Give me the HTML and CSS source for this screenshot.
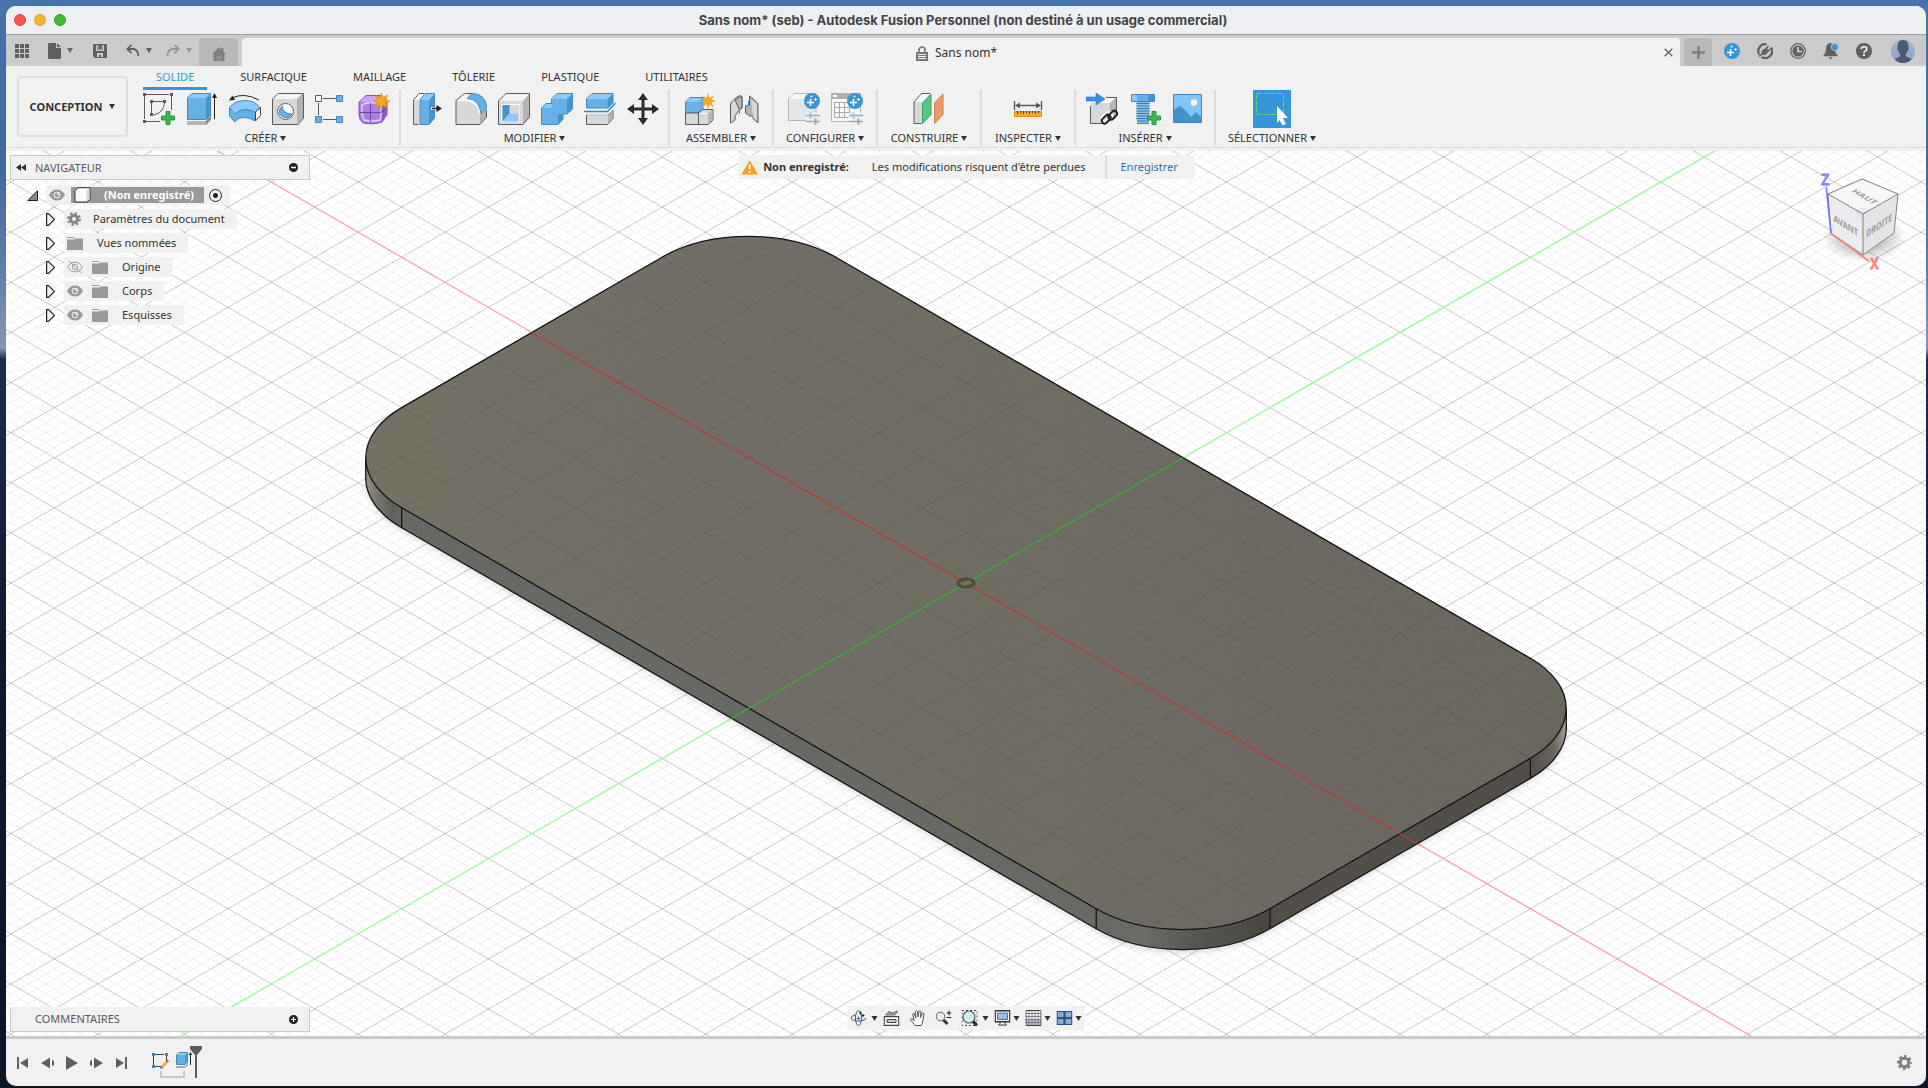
FILE: index.html
```html
<!DOCTYPE html>
<html lang="fr">
<head>
<meta charset="utf-8">
<title>Sans nom* (seb) - Autodesk Fusion Personnel</title>
<link rel="stylesheet" href="styles.css">
</head>
<body>
<div class="window">
  <header class="titlebar">
    <div class="lights"><button class="light red" aria-label="Fermer"></button><button class="light amber" aria-label="Réduire"></button><button class="light green" aria-label="Agrandir"></button></div>
    <h1>Sans nom* (seb) - Autodesk Fusion Personnel (non destiné à un usage commercial)</h1>
  </header>

  <div class="tabbar">
    <div class="quick">
      <button class="q-grid" aria-label="Groupe de données"><svg width="14" height="14" viewBox="0 0 14 14" fill="#606060"><path d="M0 0h4v4H0zM5 0h4v4H5zM10 0h4v4h-4zM0 5h4v4H0zM5 5h4v4H5zM10 5h4v4h-4zM0 10h4v4H0zM5 10h4v4H5zM10 10h4v4h-4z"/></svg></button>
      <button class="q-file" aria-label="Fichier"><svg width="13" height="16" viewBox="0 0 13 16" fill="#606060"><path d="M1 0h7v5h5v10l-1 1H1l-1-1V1zM9 0l4 4H9z"/></svg><i class="caret"></i></button>
      <button class="q-save" aria-label="Enregistrer"><svg width="14" height="14" viewBox="0 0 14 14"><path fill="#606060" d="M1 0h12l1 1v13H2l-2-2V1z"/><path fill="#cbcbcb" d="M3 1h8v6H3zM4 9h6v4H8v-2H6v2H4z"/><path fill="#606060" d="M4 1h6v4.500H4z"/><path fill="#cbcbcb" d="M4 1h2v4H4zM8.500 1H10v4H8.500z" opacity=".5"/></svg></button>
      <button class="q-undo" aria-label="Annuler"><svg width="14" height="13" viewBox="0 0 14 13" fill="none" stroke="#606060" stroke-width="1.800"><path d="M1 5h6q5 0 5.500 7M5.500 .8L1.300 5l4.200 4.200"/></svg><i class="caret"></i></button>
      <button class="q-redo" aria-label="Rétablir"><svg width="14" height="13" viewBox="0 0 14 13" fill="none" stroke="#979797" stroke-width="1.800"><path d="M13 5H7q-5 0-5.500 7M8.500 .8L12.700 5 8.500 9.200"/></svg><i class="caret pale"></i></button>
    </div>
    <button class="home" aria-label="Accueil"><svg width="14" height="14" viewBox="0 0 14 14" fill="#808080"><path d="M7 0l2.500 2.500V1h2v3.500L14 7.300h-1.500V14H8.500V9.500h-3V14h-4V7.300H0z"/><path d="M6 10.500h2V14H6z"/></svg></button>
    <div class="doctab">
      <span class="docname"><svg width="12" height="15" viewBox="0 0 12 15"><path d="M3 6V4a3 3 0 0 1 6 0v2" fill="none" stroke="#777" stroke-width="1.700"/><path fill="#777" d="M0 6h12v9H0z"/><path stroke="#f1f1f1" d="M2 8.500h8M2 10.500h8M2 12.500h8"/></svg>Sans nom*</span>
      <button class="close" aria-label="Fermer l'onglet"><svg width="9" height="9" viewBox="0 0 9 9" stroke="#606060" stroke-width="1.300"><path d="M.7 .7l7.600 7.600M8.300 .7L.7 8.300"/></svg></button>
    </div>
    <button class="newtab" aria-label="Nouvel onglet"><svg width="13" height="13" viewBox="0 0 13 13" stroke="#808080" stroke-width="2.600"><path d="M6.500 0v13M0 6.500h13"/></svg></button>
    <div class="status">
      <button aria-label="Extensions"><svg width="16" height="16" viewBox="0 0 16 16"><circle cx="8" cy="8" r="8" fill="#3697d8"/><path stroke="#fff" stroke-width="1.600" d="M6.500 6v7M3 9.500h7"/><path stroke="#fff" stroke-width="1" d="M11.500 5v3M10 6.500h3M7.500 2.500v2M6.500 3.500h2"/></svg></button>
      <button aria-label="Connexion"><svg width="16" height="16" viewBox="0 0 16 16"><path fill="none" stroke="#606060" stroke-width="2.200" d="M2.200 11.500A6.900 6.900 0 0 1 9.500 1.300M14 4.500A6.900 6.900 0 0 1 4.500 14"/><path fill="#606060" d="M4.500 8L9 4.500l3 3.500-3 3.500q-2.500 1.500-4.500-.5z"/><path stroke="#606060" stroke-width="1.600" d="M8.500 6.500l3-3.500M10.500 8.500l3.500-3M6 10l-4 3.500"/></svg></button>
      <button aria-label="Historique"><svg width="16" height="16" viewBox="0 0 16 16"><circle cx="8" cy="8" r="7.300" fill="none" stroke="#606060" stroke-width="1.300"/><circle cx="8" cy="8" r="5.600" fill="#606060"/><path d="M8 4v4.500h4" fill="none" stroke="#e0e0e0" stroke-width="1.500"/></svg></button>
      <button aria-label="Notifications"><svg width="16" height="16" viewBox="0 0 16 16"><path fill="#606060" d="M7 0q5 1 5 6 0 4 2.500 6v1.200H.5V12Q3 10 3 6q0-5 4-6zM5.500 14.200h4q-.5 1.800-2 1.800t-2-1.800z"/><circle cx="11.800" cy="4" r="3.600" fill="#3697d8" stroke="#cbcbcb" stroke-width=".8"/></svg></button>
      <button aria-label="Aide"><svg width="16" height="16" viewBox="0 0 16 16"><circle cx="8" cy="8" r="8" fill="#606060"/><path d="M5.300 6.300q0-2.700 2.700-2.700 2.800 0 2.800 2.300 0 1.200-1.500 2.100Q8 8.700 8 10" fill="none" stroke="#e4e4e4" stroke-width="1.900"/><path fill="#e4e4e4" d="M7 11h2v2H7z"/></svg></button>
    </div>
    <button class="avatar" aria-label="Profil"><svg width="24" height="24" viewBox="0 0 24 24"><defs><linearGradient id="av" x2="0" y2="1"><stop stop-color="#a9bcd9"/><stop offset="1" stop-color="#8c9dbd"/></linearGradient></defs><circle cx="12" cy="12" r="12" fill="url(#av)"/><path fill="#4c5b6e" d="M12 1q5.500 0 5.500 6 0 1 .3 2.500-.3 2-1.300 2.500-.5 2-1.800 3.300 0 2 1.300 2.700 3.500 1 4.500 2.500a12 12 0 0 1-17 0q1-1.500 4.500-2.500 1.300-.7 1.300-2.700Q8 14 7.500 12q-1-.5-1.300-2.500.3-1.500.3-2.500 0-6 5.500-6z"/></svg></button>
  </div>

  <section class="ribbon">
    <button class="workspace">CONCEPTION<i class="caret"></i></button>
    <div class="tools">
      <nav class="rtabs">
        <button class="active">SOLIDE</button><button>SURFACIQUE</button><button>MAILLAGE</button><button>TÔLERIE</button><button>PLASTIQUE</button><button>UTILITAIRES</button>
      </nav>
      <div class="groups">
        <div class="group w-create">
          <div class="icons">
            <button aria-label="Créer une esquisse"><svg viewBox="0 0 32 32"><path fill="none" stroke="#5c5c5c" d="M3 1.500h23M1.500 3v23M28.500 3v14M3 28.500h14"/><path fill="none" stroke="#5c5c5c" d="M10 8.500h10M8.500 10v10M21.500 10q-1 10-11 12"/><path fill="#5c5c5c" d="M0 0h3v3H0zM27 0h3v3h-3zM0 27h3v3H0zM7 7h3v3H7zM20 7h3v3h-3zM7 20h3v3H7z"/><path fill="#3fb354" stroke="#2a953f" d="M23 18.500h4V23h4.500v4H27v4.500h-4V27h-4.500v-4H23z"/></svg></button>
            <button aria-label="Extrusion"><svg viewBox="0 0 32 32"><path fill="#b5b5b5" d="M1 28h19v4H1zM20 28l5-5v4l-5 5z"/><path fill="#8a8a8a" d="M20 28l5-6v4l-5 6z"/><path fill="#67b0e6" d="M1 5h19v22H1z"/><path fill="#8bcaf9" d="M1 5l5-5h19l-5 5z"/><path fill="#4793cb" d="M20 5l5-5v22l-5 5z"/><path fill="none" stroke="#3f8ac4" d="M1.500 5L6 .5h18.500V22L20 26.500H1.500z"/><path stroke="#222" d="M28.500 3v23"/><path fill="#222" d="M28.500 0l2.500 5h-5z"/></svg></button>
            <button aria-label="Révolution"><svg viewBox="0 0 32 32"><path fill="#67b0e6" stroke="#3f8ac4" d="M.5 14.500V23l5.500 6q0-2 5-4 5-1 8 0 5 1 6 3l2-10z"/><path fill="#8bcaf9" stroke="#3f8ac4" d="M.5 14.500Q6 7.500 16 7.500T31 14.500L26 19.500q-4-3-10-3-6 0-10 4.500z"/><path fill="#fff" stroke="#444" d="M26.500 19l5-4.500v8L26.500 28z"/><path fill="none" stroke="#222" d="M3 5Q15-1 30 7"/><path fill="#222" d="M0 7.500l3.500-5L6 7z"/></svg></button>
            <button aria-label="Perçage"><svg viewBox="0 0 32 32"><path fill="#f4f4f4" d="M1 6l6-6h24l-6 6z"/><path fill="#b4b4b4" d="M25 6l6-6v25l-6 6z"/><path fill="#d8d8d8" d="M1 6h24v25H1z"/><path fill="none" stroke="#5a5a5a" d="M.5 6L6 .5h25.500V25L26 31.500H.500z"/><circle cx="13.500" cy="18.500" r="8" fill="#fff" stroke="#5a5a5a"/><path fill="#67b0e6" stroke="#3f8ac4" d="M10 13q1 8 10 8-3 5-8 3.500Q6 22 7.500 17z"/></svg></button>
            <button aria-label="Réseau rectangulaire"><svg viewBox="0 0 32 32"><path stroke="#5a5a5a" d="M8 5.500h13M3.500 10v12M8 26.500h13"/><path fill="#fff" stroke="#5a5a5a" d="M.5 2.500h6v6h-6z"/><path fill="#67b0e6" stroke="#3f8ac4" d="M21.500 2.500h6v6h-6zM.5 23.500h6v6h-6zM21.500 23.500h6v6h-6z"/></svg></button>
            <button aria-label="Créer une forme"><svg viewBox="0 0 32 32"><path fill="#a97fe0" stroke="#7a50b8" d="M8 2.500h14l7 5v14L24 29q-8 3-19 1-4-3-4-9V9z"/><path fill="#c7a3f7" d="M2 9q3-5 7-6h11l4 2-4 4H6z"/><path fill="#8a5cc9" d="M24 11l5-2v13l-5 6z"/><path fill="none" stroke="#e4d4fb" stroke-width="1.400" d="M4 12q3-3 18-2 2 9 0 17-8 2-16 0-3-6-2-15z"/><path fill="none" stroke="#6c43a6" d="M12.500 10v19M2 19.500h21M23 19l6-3"/><path fill="#f5a623" stroke="#d98a12" stroke-width=".6" d="M23.500 0l1.600 4.500L29.500 2l-1.800 4.500 4.300 1.800-4.300 1.600 1.800 4.500-4.400-2.200-1.600 4.300-1.700-4.300-4.400 2.200 1.800-4.500-4.200-1.600 4.200-1.800L17.500 2l4.300 2.500z"/></svg></button>
          </div>
          <button class="glabel">CRÉER<i class="caret"></i></button>
        </div>
        <div class="group w-modify">
          <div class="icons">
            <button aria-label="Appuyer/Tirer"><svg viewBox="0 0 32 32"><path fill="#d8d8d8" d="M1 7h6v24H1z"/><path fill="#fff" d="M1 7l5-6h6L7 7z"/><path fill="none" stroke="#5a5a5a" d="M6.500 31.500h-5V7L7 .5h5"/><path fill="#67b0e6" d="M8 7h9v24.500H8z"/><path fill="#8bcaf9" d="M8 7l5-6.500h9L17 7z"/><path fill="#4793cb" d="M17 7l5.500-6.500V25L17 31.500z"/><path fill="none" stroke="#3f8ac4" d="M8 31.500V7L13 .5h9.500V25L17 31.500z"/><path stroke="#f1f1f1" stroke-width="3" d="M19 15.500h8"/><path stroke="#222" stroke-width="1.300" d="M20 15.500h7"/><path fill="#222" d="M30 15.500L24.500 12v7z"/></svg></button>
            <button aria-label="Congé"><svg viewBox="0 0 32 32"><path fill="#f4f4f4" d="M1 9l10-8.500h9L14 6z"/><path fill="#b4b4b4" d="M24 22l8-7v8l-7 8h-1z"/><path fill="#d8d8d8" d="M1 9q2-2 4-2 18-1 20 16v8.500H1z"/><path fill="none" stroke="#5a5a5a" d="M18 .5H9.500L1 7.500v24h24l6.500-7.500v-7"/><path fill="none" stroke="#fff" d="M3 7.500h6Q23 8 25 21"/><path fill="#67b0e6" stroke="#3f8ac4" d="M12 5.500L17 .5q13 0 15 14l-6 6q-2-15-14-15z"/></svg></button>
            <button aria-label="Coque"><svg viewBox="0 0 32 32"><path fill="#f4f4f4" d="M1 8l8-7.500h22L25 8z"/><path fill="#b4b4b4" d="M25 8l6.500-7.500V24L25 31.500z"/><path fill="#d8d8d8" d="M1 8h24v23.500H1z"/><path fill="none" stroke="#5a5a5a" d="M.5 8L8 .5h23.500V24L25 31.500H.500z"/><path fill="#fff" d="M3.500 11h18v18h-18z"/><path fill="#d8d8d8" d="M4.500 12H21v16.500H4.500z"/><path fill="#4793cb" d="M4.500 12h7v8.500l-7 8z"/><path fill="#8bcaf9" d="M11.500 20.500H20v8H4.500z"/></svg></button>
            <button aria-label="Combiner"><svg viewBox="0 0 32 32"><path fill="#67b0e6" stroke="#3f8ac4" d="M.5 15L5 10.500h5.500V6L16 .5h15.500V16L26 21h-4v5.500L17 31.500H.500z"/><path fill="#8bcaf9" d="M11 6l5-5h15l-5 5zM1 15l4.500-4H11v4z"/><path fill="#4793cb" d="M26 6l5.500-5.500V16L26 21zM17 21h5v5l-5 5.500z"/></svg></button>
            <button aria-label="Scinder"><svg viewBox="0 0 32 32"><path fill="#67b0e6" stroke="#3f8ac4" d="M2.500 6L8 .5h21V10l-5 5H2.500z"/><path fill="#8bcaf9" d="M3 6l5-5h20.500l-5 5z"/><path fill="#4793cb" d="M23.500 6L29 1v9l-5 5z"/><path fill="none" stroke="#2b8ad6" stroke-width="1.400" d="M0 18.500h23.500L31.500 10"/><path fill="#d8d8d8" stroke="#5a5a5a" d="M2.500 22H24l5-5v8.500l-5.500 6h-21z"/><path fill="#b4b4b4" d="M24 22l4.500-5v8.500L24 31z"/><path stroke="#fff" d="M3 22h21"/></svg></button>
            <button aria-label="Déplacer"><svg viewBox="0 0 32 32" fill="#2b2b2b"><path d="M16 0l5 7h-3.500v7.500H25V11l7 5-7 5v-3.500h-7.500V25H21l-5 7-5-7h3.500v-7.500H7V21l-7-5 7-5v3.500h7.500V7H11z"/></svg></button>
          </div>
          <button class="glabel">MODIFIER<i class="caret"></i></button>
        </div>
        <div class="group w-pair">
          <div class="icons">
            <button aria-label="Nouveau composant"><svg viewBox="0 0 32 32"><path fill="#67b0e6" stroke="#3f8ac4" d="M1.500 9L6 4.500h13V16l-4 4H1.500z"/><path fill="#8bcaf9" d="M2 9l4-4h12l-4 4z"/><path fill="#d8d8d8" stroke="#5a5a5a" d="M1.500 20h13v11.500h-13zM14.500 20l4-3.500H29V27l-5 4.500h-9.500z"/><path fill="#b4b4b4" d="M24 20.500l4.500-4V27L24 31z"/><path stroke="#fff" d="M15 20.500h8.500"/><path fill="#f5a623" d="M24 0l1.600 5 4.400-3-2.500 4.600 4.500 1.400-4.500 1.500 2.500 4.700-4.400-2.700L24 16l-1.600-4.500-4.400 2.700 2.400-4.700L16 8l4.400-1.400L18 2l4.400 3z"/></svg></button>
            <button aria-label="Liaison"><svg viewBox="0 0 32 32"><path fill="#d8d8d8" stroke="#5a5a5a" d="M3.500 12q0-3 3-5L10 4q3-2.500 5-.500V15l-3 2-4 6v4l-4.500 3z"/><path fill="#b4b4b4" stroke="#5a5a5a" d="M8 7l4.500-3q2.500-1 2.500 1v10l-3 1z"/><path fill="#b4b4b4" stroke="#5a5a5a" d="M18.500 13l4-1V3l7 6q1.500 1.500 1.500 3v18l-5-4.500V23h-3l-4.500-3z"/><path fill="#d8d8d8" d="M24 6l6 5v17l-4-4z"/><path stroke="#2b8ad6" d="M12.500 16v5M21.500 8v5"/></svg></button>
          </div>
          <button class="glabel">ASSEMBLER<i class="caret"></i></button>
        </div>
        <div class="group w-pair">
          <div class="icons">
            <button aria-label="Configurer"><svg viewBox="0 0 32 32"><path fill="#e6e6e6" stroke="#b5b5b5" d="M.5 6L6 .5h22V26L25 27.500H.500z"/><path fill="#f8f8f8" d="M1 6l5-5h18l-2 5z"/><path stroke="#f1f1f1" stroke-width="6" d="M18 22.500h14M18 28.500h14"/><path stroke="#a8a8a8" stroke-width="1.400" d="M18 22.500h14M18 28.500h14"/><path stroke="#8cc4ee" stroke-width="2" d="M22.500 19.500v6"/><path stroke="#a0a0a0" stroke-width="2" d="M27.500 25.500v6"/><circle cx="24" cy="8" r="8" fill="#3697d8"/><path stroke="#fff" stroke-width="1.600" d="M22.500 6v7M19 9.500h7"/><path stroke="#fff" d="M27.500 5v3M26 6.500h3M23.500 2.500v2M22.500 3.500h2"/></svg></button>
            <button aria-label="Table de configuration"><svg viewBox="0 0 32 32"><path fill="#f8f8f8" stroke="#b0b0b0" d="M.5 .5h29v28H.500z"/><path fill="#b0b0b0" d="M0 0h30v6H0z"/><path fill="#fff" d="M2 2h4v2H2z"/><path fill="none" stroke="#a8a8a8" d="M3.500 9.500h22M3.500 14.500h22M3.500 19.500h16M3.500 24.500h14M3.500 9v16M8.500 9v16M13.500 9v16M18.500 9v11"/><path stroke="#f1f1f1" stroke-width="6" d="M19 22.500h13M19 28.500h13"/><path stroke="#a8a8a8" stroke-width="1.400" d="M18 22.500h14M18 28.500h14"/><path stroke="#8cc4ee" stroke-width="2" d="M22.500 19.500v6"/><path stroke="#a0a0a0" stroke-width="2" d="M27.500 25.500v6"/><circle cx="24" cy="8" r="8" fill="#3697d8"/><path stroke="#fff" stroke-width="1.600" d="M22.500 6v7M19 9.500h7"/><path stroke="#fff" d="M27.500 5v3M26 6.500h3M23.500 2.500v2M22.500 3.500h2"/></svg></button>
          </div>
          <button class="glabel">CONFIGURER<i class="caret"></i></button>
        </div>
        <div class="group w-pair">
          <div class="icons">
            <button aria-label="Plan de construction"><svg viewBox="0 0 32 32"><path fill="#d8d8d8" d="M1 9h8v21.500H1z"/><path fill="#f8f8f8" d="M1 9l8-8.500h8L9 9z"/><path fill="none" stroke="#5a5a5a" d="M8.500 30.500H1V9L8.500.5H17"/><path fill="#57c785" stroke="#35a163" d="M9.500 10l8.500-9v20.500L9.500 30.500z"/><path fill="#e79b69" stroke="#cf7f4b" d="M21.500 10L30 1v20.500l-8.500 9z"/></svg></button>
          </div>
          <button class="glabel">CONSTRUIRE<i class="caret"></i></button>
        </div>
        <div class="group w-inspect">
          <div class="icons">
            <button aria-label="Mesurer"><svg viewBox="0 0 32 32"><path stroke="#5a5a5a" stroke-width="1.400" d="M2.500 8v9M29.500 8v9M4 12.500h24"/><path fill="#5a5a5a" d="M3 12.500L8 9.500v6zM29 12.500l-5-3v6z"/><path fill="#f5a623" stroke="#e09312" d="M2.500 18.500h27v5h-27z"/><path stroke="#5a3b00" d="M5.500 18v3M8.500 18v2M11.500 18v3M14.500 18v2M17.500 18v3M20.500 18v2M23.500 18v3M26.500 18v2"/></svg></button>
          </div>
          <button class="glabel">INSPECTER<i class="caret"></i></button>
        </div>
        <div class="group w-insert">
          <div class="icons">
            <button aria-label="Insérer un composant"><svg viewBox="0 0 32 32"><path fill="#f8f8f8" d="M5 10l6-5h19l-6 5z"/><path fill="#b4b4b4" d="M24 10l6-5.500V25l-6 5z"/><path fill="#d8d8d8" d="M5 10h19v20H5z"/><path fill="none" stroke="#5a5a5a" d="M20 4.500h10.500V18M4.500 13v17.500H18"/><path fill="#3a8ee6" stroke="#2878cf" stroke-width=".6" d="M0 4h10V0l9 6-9 6V8H0z"/><g fill="none" stroke="#f1f1f1" stroke-width="5"><rect x="16" y="22" width="10" height="6" rx="3" transform="rotate(-45 21 25)"/></g><g fill="none" stroke="#222" stroke-width="2"><rect x="15" y="23.500" width="10" height="5.500" rx="2.700" transform="rotate(-45 20 26)"/><rect x="21.500" y="19.500" width="10" height="5.500" rx="2.700" transform="rotate(-45 26.500 22)"/></g></svg></button>
            <button aria-label="Insérer une attache"><svg viewBox="0 0 32 32"><path fill="#67b0e6" stroke="#3f8ac4" d="M2.500 1.500h23v7h-23z"/><path fill="#8bcaf9" d="M3 2h5v6H3z"/><path fill="#4793cb" d="M19 2h6v6h-6z"/><path fill="#8bbfe6" d="M8 9h12v22H8z"/><path stroke="#3f7fb4" d="M7 10.500h14M7 13h14M7 15.500h14M7 18h14M7 20.500h14M7 23h13M7 25.500h12M8 28h12M8 30.500h12"/><path fill="#3fb354" stroke="#2a953f" d="M23 18.500h4V23h4.500v4H27v4.500h-4V27h-4.500v-4H23z"/></svg></button>
            <button aria-label="Insérer une image"><svg viewBox="0 0 32 32"><path fill="#80c6fb" stroke="#3f8ac4" d="M1.500 1.500h28v28h-28z"/><circle cx="22" cy="9.500" r="3.200" fill="#fdf7cf"/><path fill="#4091cc" d="M2 17l5-4q3 0 12 11l5-5 5 5v5H2z"/></svg></button>
          </div>
          <button class="glabel">INSÉRER<i class="caret"></i></button>
        </div>
        <div class="group w-select">
          <div class="icons">
            <button class="big" aria-label="Sélectionner"><svg viewBox="0 0 38 38"><path fill="#3697d8" d="M0 0h38v38H0z"/><path fill="none" stroke="#62d96b" stroke-dasharray="5 2" d="M3.500 3.500h27v21h-27z"/><path fill="#fff" d="M24 16l11 12h-5l3 6-3.500 1.500L26.500 30 24 33z"/></svg></button>
          </div>
          <button class="glabel">SÉLECTIONNER<i class="caret"></i></button>
        </div>
      </div>
    </div>
  </section>

  <main class="viewport">
    <svg class="scene" viewBox="-960 -432 1920 885" preserveAspectRatio="xMidYMid slice" aria-hidden="true">
      <defs>
        <linearGradient id="top" gradientUnits="userSpaceOnUse" x1="-600" y1="0" x2="600" y2="0"><stop stop-color="#747165"/><stop offset=".35" stop-color="#726e67"/><stop offset=".5" stop-color="#706e63"/><stop offset=".75" stop-color="#6d6962"/><stop offset="1" stop-color="#6a675d"/></linearGradient>
        <linearGradient id="side" gradientUnits="userSpaceOnUse" x1="-600" y1="0" x2="600" y2="0"><stop stop-color="#9a9687"/><stop offset=".006" stop-color="#807d72"/><stop offset=".022" stop-color="#5f605b"/><stop offset=".03" stop-color="#666963"/><stop offset=".6" stop-color="#676a64"/><stop offset=".65" stop-color="#686b66"/><stop offset=".7" stop-color="#53524d"/><stop offset=".75" stop-color="#4a4740"/><stop offset=".76" stop-color="#524f48"/><stop offset=".97" stop-color="#524f48"/><stop offset=".99" stop-color="#6a665e"/><stop offset="1" stop-color="#a29e90"/></linearGradient>
        <filter id="soft" x="-5%" y="-5%" width="110%" height="115%"><feGaussianBlur stdDeviation="3"/></filter>
        <clipPath id="onplate"><use href="#plate"/></clipPath>
      </defs>
      <path id="minor" class="minor"/>
      <path id="major" class="major"/>
      <path class="axis" stroke="#ff9b9b" d="M-1128-651L1128 651"/>
      <path class="axis" stroke="#8dfb8d" d="M-1128 651L1128-651"/>
      <path fill="#000" opacity=".14" filter="url(#soft)" transform="translate(0 23)" d="M-564.300-75.200L130.200 325.800A122.800 70.900 0 0 0 303.900 325.800L564.300 175.400A122.800 70.900 0 0 0 600 125L0 0L-600-125A122.800 70.900 0 0 0-564.300-75.200z"/>
      <path fill="url(#side)" stroke="#141414" stroke-width="1.300" d="M-600.300-125.300V-105.300A122.800 70.900 0 0 0-564.300-55.200L130.200 345.800A122.800 70.900 0 0 0 303.900 345.800L564.300 195.400A122.800 70.900 0 0 0 600.300 145.300V125.300z"/>
      <path id="plate" fill="url(#top)" stroke="#141414" stroke-width="1.300" d="M-564.300-75.200L130.200 325.800A122.800 70.900 0 0 0 303.900 325.800L564.300 175.400A122.800 70.900 0 0 0 564.300 75.200L-130.200-325.800A122.800 70.900 0 0 0-303.900-325.800L-564.300-175.400A122.800 70.900 0 0 0-564.300-75.200z"/>
      <path stroke="#141414" stroke-width="1.300" d="M-564.300-75.200v20M130.200 325.800v20M303.900 325.800v20M564.300 175.400v20"/>
      <g clip-path="url(#onplate)" class="shade"><use href="#minor"/><use href="#major"/></g>
      <path class="axis" stroke="#b83a34" d="M-434.100-250.600L451 260.400"/>
      <path class="axis" stroke="#38b038" d="M-234.400 135.300L217-125.300"/>
      <ellipse cx="0" cy="0" rx="8" ry="4" fill="none" stroke="#45443e" stroke-width="3.200" opacity=".8"/>
    </svg>

    <aside class="browser">
      <div class="panelhead">
        <svg width="10" height="7" viewBox="0 0 10 7" fill="#2b2b2b"><path d="M5 0v7L0 3.500zM10 0v7L5 3.500z"/></svg>
        <h2>NAVIGATEUR</h2>
        <button aria-label="Réduire"><svg width="9" height="9" viewBox="0 0 9 9"><circle cx="4.500" cy="4.500" r="4.500" fill="#222"/><path stroke="#fff" stroke-width="1.400" d="M2 4.500h5"/></svg></button>
      </div>
      <ul class="tree">
        <li class="root">
          <button class="twist" aria-label="Replier"><svg width="11" height="11" viewBox="0 0 11 11"><path fill="#8a8a8a" stroke="#222" d="M10.500 .8v9.700H.8z"/></svg></button>
          <div class="item">
            <svg class="eye" width="16" height="12" viewBox="0 0 16 12"><path fill="#999" d="M0 6q3-5.500 8-5.500T16 6q-3 5.500-8 5.500T0 6z"/><circle cx="8" cy="6" r="3.300" fill="#f1f1f1"/><circle cx="8" cy="6" r="2.300" fill="#999"/><circle cx="9" cy="5" r="1" fill="#f1f1f1"/></svg>
            <span class="selected"><svg width="17" height="16" viewBox="0 0 17 16"><path fill="#fbfbfd" stroke="#333" d="M1 3.500L4 .7h12v11.800L12.700 15H1z"/><path fill="#d5d5e0" d="M12.500 3.500L15.500 1v11.300l-3 2.200z"/></svg>(Non enregistré)</span>
            <input type="radio" checked aria-label="Activer le composant">
          </div>
        </li>
        <li><button class="twist" aria-label="Déplier"><svg width="9" height="13" viewBox="0 0 9 13"><path fill="#f4f4f4" stroke="#222" stroke-width="1.200" d="M.6 .6h1.900l6 5.900-6 5.900H.6z"/></svg></button><div class="item gearrow"><svg width="14" height="14" viewBox="0 0 14 14"><circle cx="7" cy="7" r="3.500" fill="none" stroke="#848484" stroke-width="3"/><circle cx="7" cy="7" r="5.800" fill="none" stroke="#848484" stroke-width="2.200" stroke-dasharray="2.300 2.250"/></svg><span>Paramètres du document</span></div></li>
        <li><button class="twist" aria-label="Déplier"><svg width="9" height="13" viewBox="0 0 9 13"><path fill="#f4f4f4" stroke="#222" stroke-width="1.200" d="M.6 .6h1.900l6 5.900-6 5.900H.6z"/></svg></button><div class="item viewrow"><svg class="folder" width="16" height="13" viewBox="0 0 16 13" fill="#999"><path d="M0 0h7v1H0zM0 2.500h7.500V1.500H16V13H0z"/></svg><span>Vues nommées</span></div></li>
        <li><button class="twist" aria-label="Déplier"><svg width="9" height="13" viewBox="0 0 9 13"><path fill="#f4f4f4" stroke="#222" stroke-width="1.200" d="M.6 .6h1.900l6 5.900-6 5.900H.6z"/></svg></button><div class="item"><svg class="eye" width="16" height="12" viewBox="0 0 16 12" fill="none" stroke="#999"><path d="M.5 6Q3.500 1 8 1t7.500 5Q12.500 11 8 11T.5 6zM2 0l12.500 12"/><circle cx="8" cy="6" r="2.700"/></svg><svg class="folder" width="16" height="13" viewBox="0 0 16 13" fill="#999"><path d="M0 0h7v1H0zM0 2.500h7.500V1.500H16V13H0z"/></svg><span>Origine</span></div></li>
        <li><button class="twist" aria-label="Déplier"><svg width="9" height="13" viewBox="0 0 9 13"><path fill="#f4f4f4" stroke="#222" stroke-width="1.200" d="M.6 .6h1.900l6 5.900-6 5.900H.6z"/></svg></button><div class="item"><svg class="eye" width="16" height="12" viewBox="0 0 16 12"><path fill="#999" d="M0 6q3-5.500 8-5.500T16 6q-3 5.500-8 5.500T0 6z"/><circle cx="8" cy="6" r="3.300" fill="#f1f1f1"/><circle cx="8" cy="6" r="2.300" fill="#999"/><circle cx="9" cy="5" r="1" fill="#f1f1f1"/></svg><svg class="folder" width="16" height="13" viewBox="0 0 16 13" fill="#999"><path d="M0 0h7v1H0zM0 2.500h7.500V1.500H16V13H0z"/></svg><span>Corps</span></div></li>
        <li><button class="twist" aria-label="Déplier"><svg width="9" height="13" viewBox="0 0 9 13"><path fill="#f4f4f4" stroke="#222" stroke-width="1.200" d="M.6 .6h1.900l6 5.900-6 5.900H.6z"/></svg></button><div class="item"><svg class="eye" width="16" height="12" viewBox="0 0 16 12"><path fill="#999" d="M0 6q3-5.500 8-5.500T16 6q-3 5.500-8 5.500T0 6z"/><circle cx="8" cy="6" r="3.300" fill="#f1f1f1"/><circle cx="8" cy="6" r="2.300" fill="#999"/><circle cx="9" cy="5" r="1" fill="#f1f1f1"/></svg><svg class="folder" width="16" height="13" viewBox="0 0 16 13" fill="#999"><path d="M0 0h7v1H0zM0 2.500h7.500V1.500H16V13H0z"/></svg><span>Esquisses</span></div></li>
      </ul>
    </aside>

    <div class="notice">
      <svg width="17" height="15" viewBox="0 0 17 15"><path fill="#f5a01e" stroke="#f5a01e" stroke-linejoin="round" d="M8.500 1L16 14H1z"/><path stroke="#fff" stroke-width="1.800" d="M8.500 4.500v5M8.500 11v1.800"/></svg>
      <strong>Non enregistré:</strong>
      <span class="msg">Les modifications risquent d'être perdues</span>
      <a href="#">Enregistrer</a>
    </div>

    <svg class="viewcube" width="96" height="110" viewBox="0 0 96 110" role="img" aria-label="Cube de vue">
      <defs><radialGradient id="sh"><stop stop-color="#000" stop-opacity=".4"/><stop offset="1" stop-color="#000" stop-opacity="0"/></radialGradient></defs>
      <ellipse cx="48" cy="70" rx="42" ry="24" fill="url(#sh)"/>
      <path fill="#f7f7f8" d="M46 11L12 26l35 20 35-20z"/>
      <path fill="#ececee" d="M12 26l35 20v41L15 65z"/>
      <path fill="#e4e4e6" d="M82 26L47 46v41l31-22z"/>
      <path fill="#dfe4ec" d="M40 42l7-3 7 3v8l-7 4-7-4z" opacity=".7"/>
      <path fill="none" stroke="#808080" d="M46 11L12 26l35 20 35-20zM12 26l3 39 32 22 31-22 4-39M47 46v41"/>
      <path stroke="#7474ee" stroke-width="1.600" d="M10.300 19.500L15 65.500"/>
      <path stroke="#f38a8a" stroke-width="2" d="M15 65.500L53 93"/>
      <g class="face" text-anchor="middle">
        <text transform="matrix(.82 .46 -.72 .36 46 30)">HAUT</text>
        <text transform="matrix(.74 .45 .08 1 30 61)">AVANT</text>
        <text transform="matrix(.7 -.46 -.06 1 63 61)">DROITE</text>
      </g>
      <text class="z" x="5" y="17">Z</text>
      <text class="x" x="54" y="101">X</text>
    </svg>

    <div class="comments panelhead">
      <h2>COMMENTAIRES</h2>
      <button aria-label="Ajouter"><svg width="9" height="9" viewBox="0 0 9 9"><circle cx="4.500" cy="4.500" r="4.500" fill="#222"/><path stroke="#fff" stroke-width="1.200" d="M2 4.500h5M4.500 2v5"/></svg></button>
    </div>

    <div class="navbar">
      <button class="wide" aria-label="Orbite"><svg width="16" height="16" viewBox="0 0 16 16"><ellipse cx="8" cy="8" rx="3" ry="7.500" fill="#f4f4f4" stroke="#555"/><path fill="none" stroke="#555" d="M5 5Q.5 6 .5 8T6 11h4q5.500-.8 5.500-3"/><path stroke="#222" d="M10 1.500v3M8.500 3h3M12.500 4v3M11 5.500h3"/><path stroke="#2b7fe0" stroke-width="1.200" d="M8 6.500v4M6 8.500h4"/></svg><i class="caret"></i></button>
      <button class="single" aria-label="Regarder"><svg width="16" height="16" viewBox="0 0 16 16"><path fill="#a7adb5" stroke="#4a4f58" stroke-width=".8" d="M2 5l4-4v2q4 0 8-2-1 3-3 4z"/><path fill="#fff" stroke="#444" stroke-width="1.300" d="M.7 6.700h14.600v8.600H.700z"/><path fill="#c4c9d0" stroke="#444" d="M3.500 9.500h9v3h-9z"/></svg></button>
      <button class="single" aria-label="Panoramique"><svg width="16" height="16" viewBox="0 0 16 16"><path fill="#fff" stroke="#4b4f57" stroke-linejoin="round" d="M5.500 15.500Q4 13 .8 9.500q.5-1.800 2.700 0l1.200 1L3.200 4q1-1.700 1.800 0l1.300 4L6 1.500q1-1.700 2 0L8.500 7l1-5.700q1.200-1.200 1.900.2L11 7.500l1.700-4.300q1.500-.9 1.800.6L13.300 11q-.6 3-1.600 4.500z"/></svg></button>
      <button class="single" aria-label="Zoom"><svg width="16" height="16" viewBox="0 0 16 16"><circle cx="5" cy="6.500" r="4.300" fill="#e3eff2" stroke="#5a6068"/><path stroke="#333" stroke-width="2.800" d="M8 10l4 4"/><path stroke="#222" d="M11 3h5M13.500 .5v5M11 7.500h5"/></svg></button>
      <button class="wide" aria-label="Ajuster"><svg width="16" height="16" viewBox="0 0 16 16"><path fill="none" stroke="#444" stroke-dasharray="2 2" d="M.5 .5h15v15H.500z"/><circle cx="7.500" cy="7" r="6" fill="#d3ebe9" stroke="#5a6068" stroke-width="1.200"/><path stroke="#333" stroke-width="3.200" d="M11.500 11.500l4 4"/></svg><i class="caret"></i></button>
      <button aria-label="Affichage"><svg width="16" height="16" viewBox="0 0 16 16"><path fill="#fff" stroke="#333" stroke-width="1.400" d="M.7 .7h14.600v11H.700z"/><path fill="#9dbde4" stroke="#4371b0" d="M3 3h10v6.500H3z"/><path fill="#fff" stroke="#333" d="M5.500 12h5v1.500l1.500 1.500H4l1.500-1.500z"/></svg><i class="caret"></i></button>
      <button aria-label="Grille"><svg width="16" height="16" viewBox="0 0 16 16"><path fill="#fff" d="M0 0h16v16H0z"/><path fill="#b9c3d4" d="M0 9h16v7H0z"/><path fill="none" stroke="#7a7f88" d="M3.500 0v16M6.500 0v16M9.500 0v16M12.500 0v16M0 3.500h16M0 6.500h16M0 9.500h16M0 12.500h16"/><path fill="none" stroke="#444" d="M.5 .5h15v15H.500z"/></svg><i class="caret"></i></button>
      <button aria-label="Fenêtres"><svg width="16" height="14" viewBox="0 0 16 14"><path fill="#a9c4e6" stroke="#2f4f86" stroke-width="1.300" d="M.7 .7h6.800v5.800H.7zM8.500 .7h6.800v5.800H8.500zM.7 7.500h6.800v5.800H.7zM8.500 7.500h6.800v5.800H8.500z"/><path fill="none" stroke="#7d9cc9" d="M2.500 2.500h3v2h-3zM10.500 2.500h3v2h-3zM2.500 9.500h3v2h-3zM10.500 9.500h3v2h-3z"/></svg><i class="caret"></i></button>
    </div>
  </main>

  <footer class="timeline">
    <div class="play">
      <button aria-label="Début"><svg width="12" height="12" viewBox="0 0 12 12" fill="#606060"><path d="M0 0h2v12H0zM11 1v10L3 6z"/></svg></button>
      <button aria-label="Reculer"><svg width="13" height="12" viewBox="0 0 13 12" fill="#606060"><path d="M9 .5v11L0 6zM11 3.500h2v5h-2z"/></svg></button>
      <button aria-label="Lire"><svg width="12" height="14" viewBox="0 0 12 14" fill="#606060"><path d="M0 0l12 7-12 7z"/></svg></button>
      <button aria-label="Avancer"><svg width="13" height="12" viewBox="0 0 13 12" fill="#606060"><path d="M4 .5L13 6l-9 5.500zM0 3.500h2v5H0z"/></svg></button>
      <button aria-label="Fin"><svg width="12" height="12" viewBox="0 0 12 12" fill="#606060"><path d="M10 0h2v12h-2zM1 1l8 5-8 5z"/></svg></button>
    </div>
    <svg class="history" width="52" height="34" viewBox="0 0 52 34">
      <path fill="none" stroke="#444" d="M3 8.500h9M1.500 10v9M14.500 10v6M3 20.500h6"/><path fill="#2b8ad6" d="M0 7h3v3H0zM13 7h3v3h-3zM0 19h3v3H0z"/>
      <path fill="#f3b23c" d="M9 20l4-4.500 2.500 2L11 22z"/><path fill="#e84848" d="M13.500 15l2-1.500 1.500 2L15.500 17z"/><path fill="#555" d="M8 23l1.500-3 1.500 2z"/>
      <path fill="#aaa" d="M24 20h9l3-3v2.500L33 22h-9z"/><path fill="#67b0e6" stroke="#3f8ac4" d="M24.500 9L27 6.500h8.500V16L33 18.500h-8.500z"/><path fill="#4793cb" d="M33 9l2.500-2.500V16L33 18.500z"/><path fill="#8bcaf9" d="M25 9l2-2h8l-2 2z"/><path stroke="#222" d="M38.500 8v11"/><path fill="#222" d="M38.500 6l2 3h-4z"/>
      <path fill="none" stroke="#c9c9c9" stroke-width="2" d="M9 25v6h23v-6"/>
      <path fill="#5c5c5c" d="M38 0h12v3l-5 6V32h-2V9l-5-6z"/>
    </svg>
    <button class="settings" aria-label="Préférences"><svg width="15" height="15" viewBox="0 0 15 15"><circle cx="7.500" cy="7.500" r="4.200" fill="none" stroke="#808080" stroke-width="3"/><circle cx="7.500" cy="7.500" r="6.400" fill="none" stroke="#808080" stroke-width="2.200" stroke-dasharray="2.800 2.226" stroke-dashoffset="1.400"/></svg></button>
  </footer>
</div>
<script src="grid.js"></script>
</body>
</html>
```
FILE: grid.js
```js
// Isometric floor grid: one cell is 43.41 x 25.06 from centre to corner, split in five.
const HX = 43.41, HY = 25.06, REACH = 34;
function lines(step, skip) {
  let d = '';
  const count = Math.round(REACH / step);
  for (let i = -count; i <= count; i++) {
    if (i === 0 || (skip && i % skip === 0)) continue;
    const k = i * step;
    d += `M${HX * (k - REACH)} ${HY * (k + REACH)}L${HX * (k + REACH)} ${HY * (k - REACH)}`;
    d += `M${HX * (k - REACH)} ${HY * (-k - REACH)}L${HX * (k + REACH)} ${HY * (-k + REACH)}`;
  }
  return d;
}
document.getElementById('minor').setAttribute('d', lines(0.2, 5));
document.getElementById('major').setAttribute('d', lines(1, 0));
```
FILE: styles.css
```css
* { box-sizing: border-box; }
body {
  margin: 0;
  min-height: 100vh;
  padding: 6px 2px 2px 6px;
  display: flex;
  font: 11px/16px "Noto Sans", sans-serif;
  color: #333;
  background: linear-gradient(180deg, #4773ab 0, #41699f 15%, #5c7ba8 24%, #8297b8 32%, #1a2c52 33%, #0d1930 60%, #0b1629 100%);
}
button { border: 0; padding: 0; margin: 0; background: none; font: inherit; color: inherit; display: flex; align-items: center; justify-content: center; }
svg { display: block; flex: none; }
h1, h2, ul { margin: 0; padding: 0; }
.caret { width: 0; height: 0; border: 3px solid transparent; border-top: 5px solid #333; border-bottom: 0; flex: none; }

.window { flex: 1; min-width: 0; display: flex; flex-direction: column; border-radius: 10px; overflow: hidden; background: #f1f1f1; }

.titlebar { height: 29px; display: grid; grid-template-columns: 1fr auto 1fr; align-items: center; padding: 0 14px 0 8px; background: #eeeff2; border-bottom: 1px solid #9d9d9d; }
.titlebar h1 { font: bold 13px/20px Inter, sans-serif; color: #444; }
.lights { display: flex; gap: 8px; }
.light { width: 12px; height: 12px; border-radius: 50%; }
.red { background: #f2594c; border: 1px solid #d9463b; }
.amber { background: #f6b52f; border: 1px solid #dd9d25; }
.green { background: #46b93b; border: 1px solid #33a02b; }

.tabbar { height: 31px; display: flex; align-items: flex-end; background: #cbcbcb; }
.quick { width: 193px; height: 31px; display: flex; align-items: center; padding-left: 9px; }
.quick .caret { margin-left: 6px; border-top-color: #606060; }
.quick .caret.pale { border-top-color: #979797; }
.q-grid { margin-right: 19px; }
.q-file { margin-right: 20px; }
.q-save { margin-right: 19px; }
.q-undo { margin-right: 14px; }
.home { width: 39px; height: 28px; padding-top: 4px; background: #b9b9b9; border-radius: 4px 4px 0 0; margin-right: 4px; }
.doctab { flex: 1; height: 28px; display: flex; align-items: center; background: #f1f1f1; border-radius: 4px 4px 0 0; padding: 0 7px; }
.docname { flex: 1; display: flex; align-items: center; justify-content: center; gap: 7px; font-size: 12px; padding-top: 2px; }
.newtab { width: 28px; height: 28px; margin-left: 4px; background: #b9b9b9; border-radius: 4px 4px 0 0; }
.status { height: 31px; display: flex; align-items: center; gap: 17px; padding: 0 19px 0 12px; }
.avatar { height: 31px; margin-right: 11px; }

.ribbon { height: 82px; display: flex; border-bottom: 1px solid #dcdcdc; }
.workspace { width: 111px; height: 61px; margin: 10px 4px 0 11px; gap: 7px; border: 2px solid #dedede; border-radius: 4px; font-weight: bold; }
.tools { flex: 1; min-width: 0; }
.rtabs { display: flex; gap: 20px; padding-left: 11px; }
.rtabs button { height: 24px; padding: 1px 13px 0; border-bottom: 3px solid transparent; }
.rtabs .active { color: #3697d8; border-bottom-color: #3697d8; }
.groups { display: flex; }
.group { height: 56px; border-right: 2px solid #dcdcdc; display: flex; flex-direction: column; align-items: center; justify-content: space-between; }
.group:last-child { border: 0; }
.w-create, .w-modify { width: 269px; }
.w-create .icons, .w-modify .icons { padding-left: 2px; }
.w-pair { width: 104px; }
.w-inspect { width: 94px; }
.w-insert { width: 140px; }
.w-select { width: 112px; }
.icons { display: flex; gap: 11px; height: 38px; align-items: center; }
.icons svg { width: 32px; height: 32px; }
.icons .big svg { width: 38px; height: 38px; }
.glabel { gap: 3px; height: 16px; }

.viewport { flex: 1; position: relative; overflow: hidden; background: #fff; display: flex; flex-direction: column; justify-content: space-between; border-top: 3px solid #f1f1f1; }
.scene { position: absolute; inset: 0; width: 100%; height: 100%; fill: none; }
.minor { stroke: #000; stroke-opacity: .06; stroke-width: 1; }
.major { stroke: #000; stroke-opacity: .21; stroke-width: 1; }
.shade { opacity: .45; }
.axis { stroke-width: 1.2; }

.browser { position: relative; width: 300px; margin: 4px 0 0 4px; }
.panelhead { height: 25px; display: flex; align-items: center; background: #f1f1f1; border: 1px solid #c8c8c8; padding: 0 11px 0 5px; }
.panelhead h2 { flex: 1; font: 11px/16px "Noto Sans", sans-serif; color: #5a5a5a; margin-left: 9px; }
.tree { list-style: none; margin-top: 5px; display: flex; flex-direction: column; gap: 4px; }
.tree li { height: 20px; display: flex; align-items: center; padding-left: 36px; }
.tree li.root { padding-left: 17px; }
.twist { width: 18px; justify-content: flex-start; }
.root .twist { width: 19px; }
.item { height: 20px; display: flex; align-items: center; padding: 0 12px 0 3px; background: #f1f1f1; }
.item .folder { margin-left: 9px; }
.item span { margin-left: 14px; }
.item.gearrow span { margin-left: 12px; }
.item.viewrow .folder { margin-left: 0; }
.item .selected { height: 16px; display: flex; align-items: center; gap: 13px; margin-left: 6px; padding: 0 10px 0 3px; background: #999; color: #fff; font-weight: bold; }
.item input { appearance: none; width: 13px; height: 13px; margin: 0 0 0 5px; border: 1px solid #222; border-radius: 50%; background: radial-gradient(circle, #222 0 2px, #f1f1f1 3px); }
.root .item { padding-right: 8px; }

.notice { position: absolute; top: 4px; left: 50%; transform: translateX(-50%); height: 24px; display: flex; align-items: center; background: #f1f1f1; padding: 0 16px 0 3px; white-space: nowrap; }
.notice strong { margin-left: 5px; }
.notice .msg { margin: 0 20px 0 23px; }
.notice a { height: 24px; line-height: 24px; padding-left: 13px; border-left: 2px solid #dcdcdc; color: #1c72b8; text-decoration: none; }

.viewcube { position: absolute; top: 17px; right: 14px; }
.viewcube .face { font: bold 10px "Noto Sans", sans-serif; fill: #9b9da2; }
.viewcube .z, .viewcube .x { font: 14px Roboto, sans-serif; }
.viewcube .z { fill: #8585ff; stroke: #8585ff; }
.viewcube .x { fill: #ff8080; stroke: #ff8080; }

.comments { position: relative; width: 300px; margin: 0 0 4px 4px; border-top: 0; }
.comments h2 { margin-left: 19px; }

.navbar { position: absolute; bottom: 6px; left: 50%; transform: translateX(-50%); height: 24px; display: flex; align-items: center; gap: 6px; padding: 0 3px; background: #f1f1f1; }
.navbar button { gap: 3px; }
.navbar .wide { gap: 5px; }
.navbar .single { margin-right: 4px; }

.timeline { height: 50px; display: flex; align-items: center; border-top: 3px solid #cacaca; padding: 0 14px 0 11px; }
.play { display: flex; gap: 12px; }
.history { margin-left: 25px; }
.settings { margin-left: auto; }
```
